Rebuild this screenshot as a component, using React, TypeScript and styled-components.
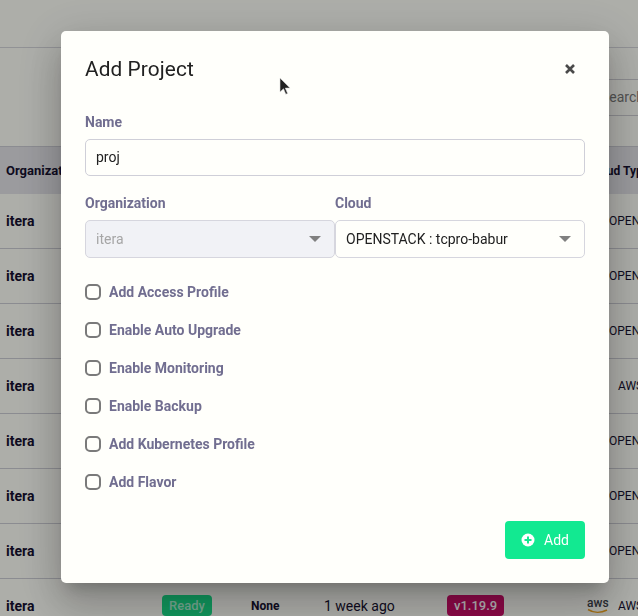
import React from 'react';
import styled, { createGlobalStyle } from 'styled-components';

const GlobalStyle = createGlobalStyle`
  html, body {
    margin: 0;
    padding: 0;
    height: 100%;
    overflow: hidden;
    background: #f8f9f3;
    font-family: Roboto, "Liberation Sans", sans-serif;
  }
  * { box-sizing: border-box; }
`;

const Page = styled.div`
  width: 638px;
  height: 616px;
  overflow: hidden;
  color: #15102e;
`;

const TopBar = styled.div`
  height: 48px;
  border-bottom: 1px solid #d0d1d6;
`;

const Toolbar = styled.div`
  height: 98px;
  display: flex;
  justify-content: flex-end;
  align-items: flex-start;
  padding-top: 31px;
  margin-right: -60px;
`;

const SearchBox = styled.div`
  width: 97px;
  height: 37px;
  border-top: 1px solid #c9c9ce;
  border-bottom: 1px solid #c9c9ce;
  font-size: 14px;
  line-height: 35px;
  color: #777;
`;

const Table = styled.div`
  width: 800px;
`;

const Row = styled.div<{ $head?: boolean }>`
  display: grid;
  grid-template-columns: 162px 83px 73px 129px 125px 222px;
  align-items: center;
  height: ${(p) => (p.$head ? '48px' : '55px')};
  padding-left: 6px;
  border-top: ${(p) => (p.$head ? '1px solid #c8c9d0' : '0')};
  border-bottom: ${(p) => (p.$head ? '0' : '1px solid #c8c9d0')};
  background: ${(p) => (p.$head ? '#dedee3' : 'transparent')};
  font-size: ${(p) => (p.$head ? '13px' : '14px')};
  font-weight: ${(p) => (p.$head ? 700 : 400)};
`;

const Org = styled.div`
  font-weight: 700;
`;

const Badge = styled.div<{ $bg: string; $fg: string }>`
  justify-self: start;
  margin: 0 0 2px -6px;
  padding: 0 7px;
  height: 21px;
  line-height: 21px;
  border-radius: 4px;
  font-size: 13px;
  font-weight: 500;
  background: ${(p) => p.$bg};
  color: ${(p) => p.$fg};
`;

const Cell = styled.div<{ $bold?: boolean }>`
  font-size: ${(p) => (p.$bold ? '12px' : '14px')};
  font-weight: ${(p) => (p.$bold ? 700 : 400)};
`;

const CloudCell = styled.div<{ $indent: number }>`
  display: flex;
  align-items: center;
  gap: 9px;
  padding-left: ${(p) => p.$indent}px;
  font-size: 12px;
`;

const Backdrop = styled.div`
  position: fixed;
  inset: 0;
  padding: 31px 0 0 61px;
  background: rgba(0, 0, 0, 0.3);
`;

const Modal = styled.div`
  width: 548px;
  height: 552px;
  display: flex;
  flex-direction: column;
  padding: 0 24px;
  border-radius: 5px;
  background: #fffffb;
  box-shadow:
    0 11px 15px -7px rgba(0, 0, 0, 0.2),
    0 24px 38px 3px rgba(0, 0, 0, 0.14),
    0 9px 46px 8px rgba(0, 0, 0, 0.12);
`;

const ModalHead = styled.div`
  display: flex;
  justify-content: space-between;
  align-items: center;
  height: 83px;
  padding-bottom: 7px;
`;

const Title = styled.h2`
  margin: 0;
  font-size: 20.8px;
  font-weight: 400;
  letter-spacing: 0.1px;
  color: #212121;
`;

const Close = styled.button`
  display: flex;
  width: 12px;
  height: 12px;
  margin-right: 9px;
  padding: 0;
  border: 0;
  background: none;
`;

const Label = styled.label`
  display: block;
  height: 17px;
  margin-bottom: 8px;
  font-size: 14px;
  line-height: 17px;
  font-weight: 700;
  color: #716e90;
`;

const Field = styled.div`
  margin-bottom: 19px;
`;

const Input = styled.div`
  height: 37px;
  padding: 0 10px;
  border: 1px solid #cfcfd8;
  border-radius: 5px;
  font-size: 14px;
  line-height: 35px;
  color: #212121;
`;

const SelectRow = styled.div`
  display: grid;
  grid-template-columns: 250px 250px;
  margin-bottom: 25px;
`;

const Select = styled.div<{ $disabled?: boolean }>`
  display: flex;
  justify-content: space-between;
  align-items: center;
  height: 38px;
  padding: 0 13px 0 10px;
  border: 1px solid #d6d6de;
  border-radius: 5px;
  font-size: 14px;
  background: ${(p) => (p.$disabled ? '#f1f2f6' : 'transparent')};
  color: ${(p) => (p.$disabled ? '#a6a6a6' : '#212121')};
`;

const Caret = styled.span`
  width: 0;
  height: 0;
  border-left: 6px solid transparent;
  border-right: 6px solid transparent;
  border-top: 6px solid #808080;
`;

const Options = styled.div`
  display: flex;
  flex-direction: column;
  gap: 20px;
`;

const Option = styled.div`
  display: flex;
  align-items: center;
  gap: 8px;
  height: 18px;
  font-size: 14px;
  font-weight: 700;
  color: #716e90;
`;

const Box = styled.span`
  width: 16px;
  height: 16px;
  border: 2px solid #7a7a7a;
  border-radius: 5px;
`;

const Footer = styled.div`
  display: flex;
  justify-content: flex-end;
  margin-top: 30px;
`;

const AddButton = styled.button`
  display: flex;
  align-items: center;
  justify-content: center;
  gap: 9px;
  width: 80px;
  height: 38px;
  padding: 0;
  border: 0;
  border-radius: 4px;
  background: #12e991;
  color: #fff;
  font-family: inherit;
  font-size: 14px;
`;

const Pointer = styled.svg`
  position: absolute;
  left: 279px;
  top: 77px;
`;

const AwsLogo = () => (
  <svg width="22" height="16" viewBox="0 0 22 16">
    <text x="0" y="9" fontFamily="Roboto, sans-serif" fontSize="12" fontWeight="500" fill="#3a3f4a">aws</text>
    <path d="M1 11.5c5.500 3.600 13 3.600 19 .5" fill="none" stroke="#e8a020" strokeWidth="1.500" />
  </svg>
);

const rows = [
  { cloud: 'OPENSTACK', aws: false },
  { cloud: 'OPENSTACK', aws: false },
  { cloud: 'OPENSTACK', aws: false },
  { cloud: 'AWS', aws: true },
  { cloud: 'OPENSTACK', aws: false },
  { cloud: 'OPENSTACK', aws: false },
  { cloud: 'OPENSTACK', aws: false },
  { cloud: 'AWS', aws: true },
];

const options = [
  'Add Access Profile',
  'Enable Auto Upgrade',
  'Enable Monitoring',
  'Enable Backup',
  'Add Kubernetes Profile',
  'Add Flavor',
];

export default function App() {
  return (
    <>
      <GlobalStyle />
      <Page>
        <TopBar />
        <Toolbar>
          <SearchBox>Search</SearchBox>
        </Toolbar>
        <Table>
          <Row $head>
            <div>Organization</div>
            <div>Status</div>
            <div>Access</div>
            <div>Created</div>
            <div>Version</div>
            <CloudCell $indent={11}>
              <Cell $bold>Cloud Type</Cell>
            </CloudCell>
          </Row>
          {rows.map((r, i) => (
            <Row key={i}>
              <Org>itera</Org>
              <Badge $bg="#18d886" $fg="#a8f0d0">Ready</Badge>
              <Cell $bold>None</Cell>
              <Cell>1 week ago</Cell>
              <Badge $bg="#c80c66" $fg="#fff">v1.19.9</Badge>
              <CloudCell $indent={r.aws ? 9 : 0}>
                {r.aws ? <AwsLogo /> : <span style={{ width: 22 }} />}
                {r.cloud}
              </CloudCell>
            </Row>
          ))}
        </Table>
      </Page>
      <Backdrop>
        <Modal>
          <ModalHead>
            <Title>Add Project</Title>
            <Close aria-label="Close">
              <svg width="12" height="12" viewBox="0 0 12 12">
                <path d="M2 2l8 8M10 2l-8 8" stroke="#4a4a4a" strokeWidth="2.600" />
              </svg>
            </Close>
          </ModalHead>
          <Field>
            <Label>Name</Label>
            <Input>proj</Input>
          </Field>
          <SelectRow>
            <div>
              <Label>Organization</Label>
              <Select $disabled>
                itera
                <Caret />
              </Select>
            </div>
            <div>
              <Label>Cloud</Label>
              <Select>
                OPENSTACK : tcpro-babur
                <Caret />
              </Select>
            </div>
          </SelectRow>
          <Options>
            {options.map((o) => (
              <Option key={o}>
                <Box />
                {o}
              </Option>
            ))}
          </Options>
          <Footer>
            <AddButton>
              <svg width="14" height="14" viewBox="0 0 14 14">
                <circle cx="7" cy="7" r="6.500" fill="#fff" />
                <path d="M7 3.500v7M3.500 7h7" stroke="#12e991" strokeWidth="2" />
              </svg>
              Add
            </AddButton>
          </Footer>
        </Modal>
        <Pointer width="12" height="20" viewBox="0 0 12 20">
          <path d="M1 1v14l3.500-3.200 2.300 5.400 1.800-.8-2.300-5.300H11z" fill="#222" stroke="#ddd" strokeWidth="0.600" />
        </Pointer>
      </Backdrop>
    </>
  );
}
